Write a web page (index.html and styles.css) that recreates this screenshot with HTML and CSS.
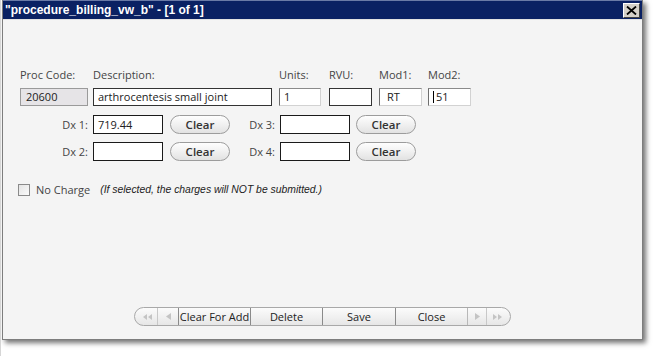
FILE: index.html
```html
<!DOCTYPE html>
<html>
<head>
<meta charset="utf-8">
<link rel="stylesheet" href="styles.css">
</head>
<body>
<div class="window">
  <div class="titlebar">
    <span class="title">"procedure_billing_vw_b" - [1 of 1]</span>
    <span class="close"><svg width="11" height="9" viewBox="0 0 11 9"><path d="M1 0.5 L10 8.5 M10 0.5 L1 8.5" stroke="#000" stroke-width="1.8"/></svg></span>
  </div>
  <div class="content">
    <div class="fields">
      <span class="lbl">Proc Code:</span>
      <span class="lbl">Description:</span>
      <span class="lbl">Units:</span>
      <span class="lbl">RVU:</span>
      <span class="lbl">Mod1:</span>
      <span class="lbl">Mod2:</span>
      <div class="box code">20600</div>
      <div class="box desc">arthrocentesis small joint</div>
      <div class="box sunk units">1</div>
      <div class="box rvu"></div>
      <div class="box sunk mod">RT</div>
      <div class="box sunk mod"><span class="caret"></span>51</div>
    </div>
    <div class="dx">
      <span class="dxl">Dx 1:</span>
      <div class="dxcell"><div class="box dxbox">719.44</div></div>
      <div class="btncell"><button class="clear">Clear</button></div>
      <span class="dxl dxl-r">Dx 3:</span>
      <div class="dxcell"><div class="box dxbox"></div></div>
      <div class="btncell btncell-r"><button class="clear">Clear</button></div>
      <span class="dxl">Dx 2:</span>
      <div class="dxcell"><div class="box dxbox"></div></div>
      <div class="btncell"><button class="clear">Clear</button></div>
      <span class="dxl dxl-r">Dx 4:</span>
      <div class="dxcell"><div class="box dxbox"></div></div>
      <div class="btncell btncell-r"><button class="clear">Clear</button></div>
    </div>
    <div class="charge">
      <span class="check"></span>
      <span class="nc">No Charge</span>
      <span class="note">(If selected, the charges will NOT be submitted.)</span>
    </div>
    <div class="bar">
      <span class="seg cap-l arrow"><svg width="9" height="6" viewBox="0 0 9 6"><path d="M4 0 L0 3 L4 6 Z M9 0 L5 3 L9 6 Z" fill="#c4c4c4"/></svg></span>
      <span class="seg arrow"><svg width="5" height="7" viewBox="0 0 5 7"><path d="M5 0 L0 3.5 L5 7 Z" fill="#c4c4c4"/></svg></span>
      <span class="seg txt">Clear For Add</span>
      <span class="seg txt">Delete</span>
      <span class="seg txt w-save">Save</span>
      <span class="seg txt">Close</span>
      <span class="seg arrow w-next"><svg width="5" height="7" viewBox="0 0 5 7"><path d="M0 0 L5 3.5 L0 7 Z" fill="#c4c4c4"/></svg></span>
      <span class="seg cap-r arrow"><svg width="9" height="6" viewBox="0 0 9 6"><path d="M0 0 L4 3 L0 6 Z M5 0 L9 3 L5 6 Z" fill="#c4c4c4"/></svg></span>
    </div>
  </div>
</div>
</body>
</html>
```
FILE: styles.css
```css
html, body {
  margin: 0;
  padding: 0;
  background: #ffffff;
}
body {
  width: 660px;
  height: 356px;
  overflow: hidden;
  border-left: 1px solid #d6d6d6;
  box-sizing: border-box;
}
.window {
  margin-left: 1px;
  width: 641px;
  height: 340px;
  box-sizing: border-box;
  border: 1px solid #7d7d7d;
  border-top: none;
  background: #f4f4f4;
  box-shadow: 3px 3px 5px rgba(0, 0, 0, 0.55);
  display: flex;
  flex-direction: column;
}
.titlebar {
  height: 18px;
  background: #0a2163;
  border-top: 1px solid #6a7aa6;
  border-bottom: 1px solid #e2e2e2;
  display: flex;
  align-items: center;
  justify-content: space-between;
  padding: 0 2px 0 2px;
}
.title {
  font-family: "Liberation Sans", Arial, sans-serif;
  font-weight: bold;
  font-size: 12px;
  color: #ffffff;
}
.close {
  width: 15px;
  height: 13px;
  background: #d4d0c8;
  border-top: 1px solid #ffffff;
  border-left: 1px solid #ffffff;
  border-right: 1px solid #404040;
  border-bottom: 1px solid #404040;
  display: flex;
  align-items: center;
  justify-content: center;
}
.content {
  flex: 1;
  display: flex;
  flex-direction: column;
  padding: 47px 0 0 17px;
  font-family: "Open Sans", sans-serif;
  font-size: 11px;
  color: #444;
}
.fields {
  display: grid;
  grid-template-columns: 73px 186px 50px 50px 49px 50px;
  grid-template-rows: 15px 18px;
  row-gap: 6px;
}
.lbl {
  line-height: 15px;
  white-space: nowrap;
}
.box {
  box-sizing: border-box;
  height: 18px;
  background: #ffffff;
  border: 1px solid #333;
  padding-left: 4px;
  line-height: 16px;
  color: #222;
  font-size: 11px;
  white-space: nowrap;
  overflow: hidden;
}
.code {
  width: 68px;
  background: #e6e4e7;
  border-color: #9a9a9a;
  padding-left: 5px;
}
.desc {
  width: 179px;
}
.sunk {
  border-top-color: #8a8a8a;
  border-left-color: #6e6e6e;
  border-right-color: #d2d2d2;
  border-bottom-color: #d2d2d2;
}
.units {
  width: 42px;
}
.rvu {
  width: 43px;
}
.mod {
  width: 43px;
  padding-left: 7px;
}
.caret {
  display: inline-block;
  width: 1px;
  height: 12px;
  background: #000;
  vertical-align: -2px;
  margin-left: -3px;
  margin-right: 2px;
}
.dx {
  margin-top: 9px;
  display: grid;
  grid-template-columns: 68px 75px 67px 45px 75px 66px;
  grid-auto-rows: 19px;
  row-gap: 8px;
}
.dxl {
  text-align: right;
  line-height: 19px;
  white-space: nowrap;
}
.dxcell {
  padding-left: 5px;
}
.dxbox {
  width: 70px;
  height: 19px;
  border-color: #1a1a1a;
  line-height: 17px;
}
.btncell {
  padding-left: 7px;
}
.btncell-r {
  padding-left: 6px;
}
.clear {
  display: block;
  width: 60px;
  height: 19px;
  border-radius: 10px;
  border: 1px solid #9c9c9c;
  background: linear-gradient(#fefefe, #f2f2f2 45%, #e2e2e2);
  font-family: "Open Sans", sans-serif;
  font-weight: 600;
  font-size: 11.5px;
  color: #333;
  padding: 0;
  line-height: 17px;
}
.charge {
  margin-top: 22px;
  display: flex;
  align-items: center;
  height: 13px;
}
.check {
  box-sizing: border-box;
  width: 12px;
  height: 12px;
  margin-left: -2px;
  border: 1px solid #8a8a8a;
  background: linear-gradient(135deg, #e4e4e4, #fbfbfb);
}
.nc {
  margin-left: 6px;
  font-size: 11px;
  color: #444;
}
.note {
  margin-left: 10px;
  font-family: "Liberation Sans", Arial, sans-serif;
  font-style: italic;
  font-size: 10.4px;
  color: #222;
}
.bar {
  margin-top: auto;
  margin-bottom: 13px;
  margin-left: -17px;
  align-self: center;
  display: flex;
  height: 19px;
  box-sizing: border-box;
  border: 1px solid #a8a8a8;
  border-radius: 10px;
  background: linear-gradient(#fbfbfb, #f1f1f1 50%, #e6e6e6);
  overflow: hidden;
}
.seg {
  box-sizing: border-box;
  display: flex;
  align-items: center;
  justify-content: center;
  height: 17px;
  border-left: 1px solid #8a8a8a;
  font-family: "Open Sans", sans-serif;
  font-size: 11px;
  color: #222;
  width: 72px;
}
.arrow {
  width: 21px;
  border-left-color: #c8c8c8;
}
.cap-l {
  width: 22px;
  border-left: none;
  padding-left: 2px;
}
.cap-r {
  width: 24px;
  padding-right: 3px;
}
.w-next {
  width: 19px;
  border-left-color: #b8b8b8;
}
.w-save {
  width: 73px;
}
```
